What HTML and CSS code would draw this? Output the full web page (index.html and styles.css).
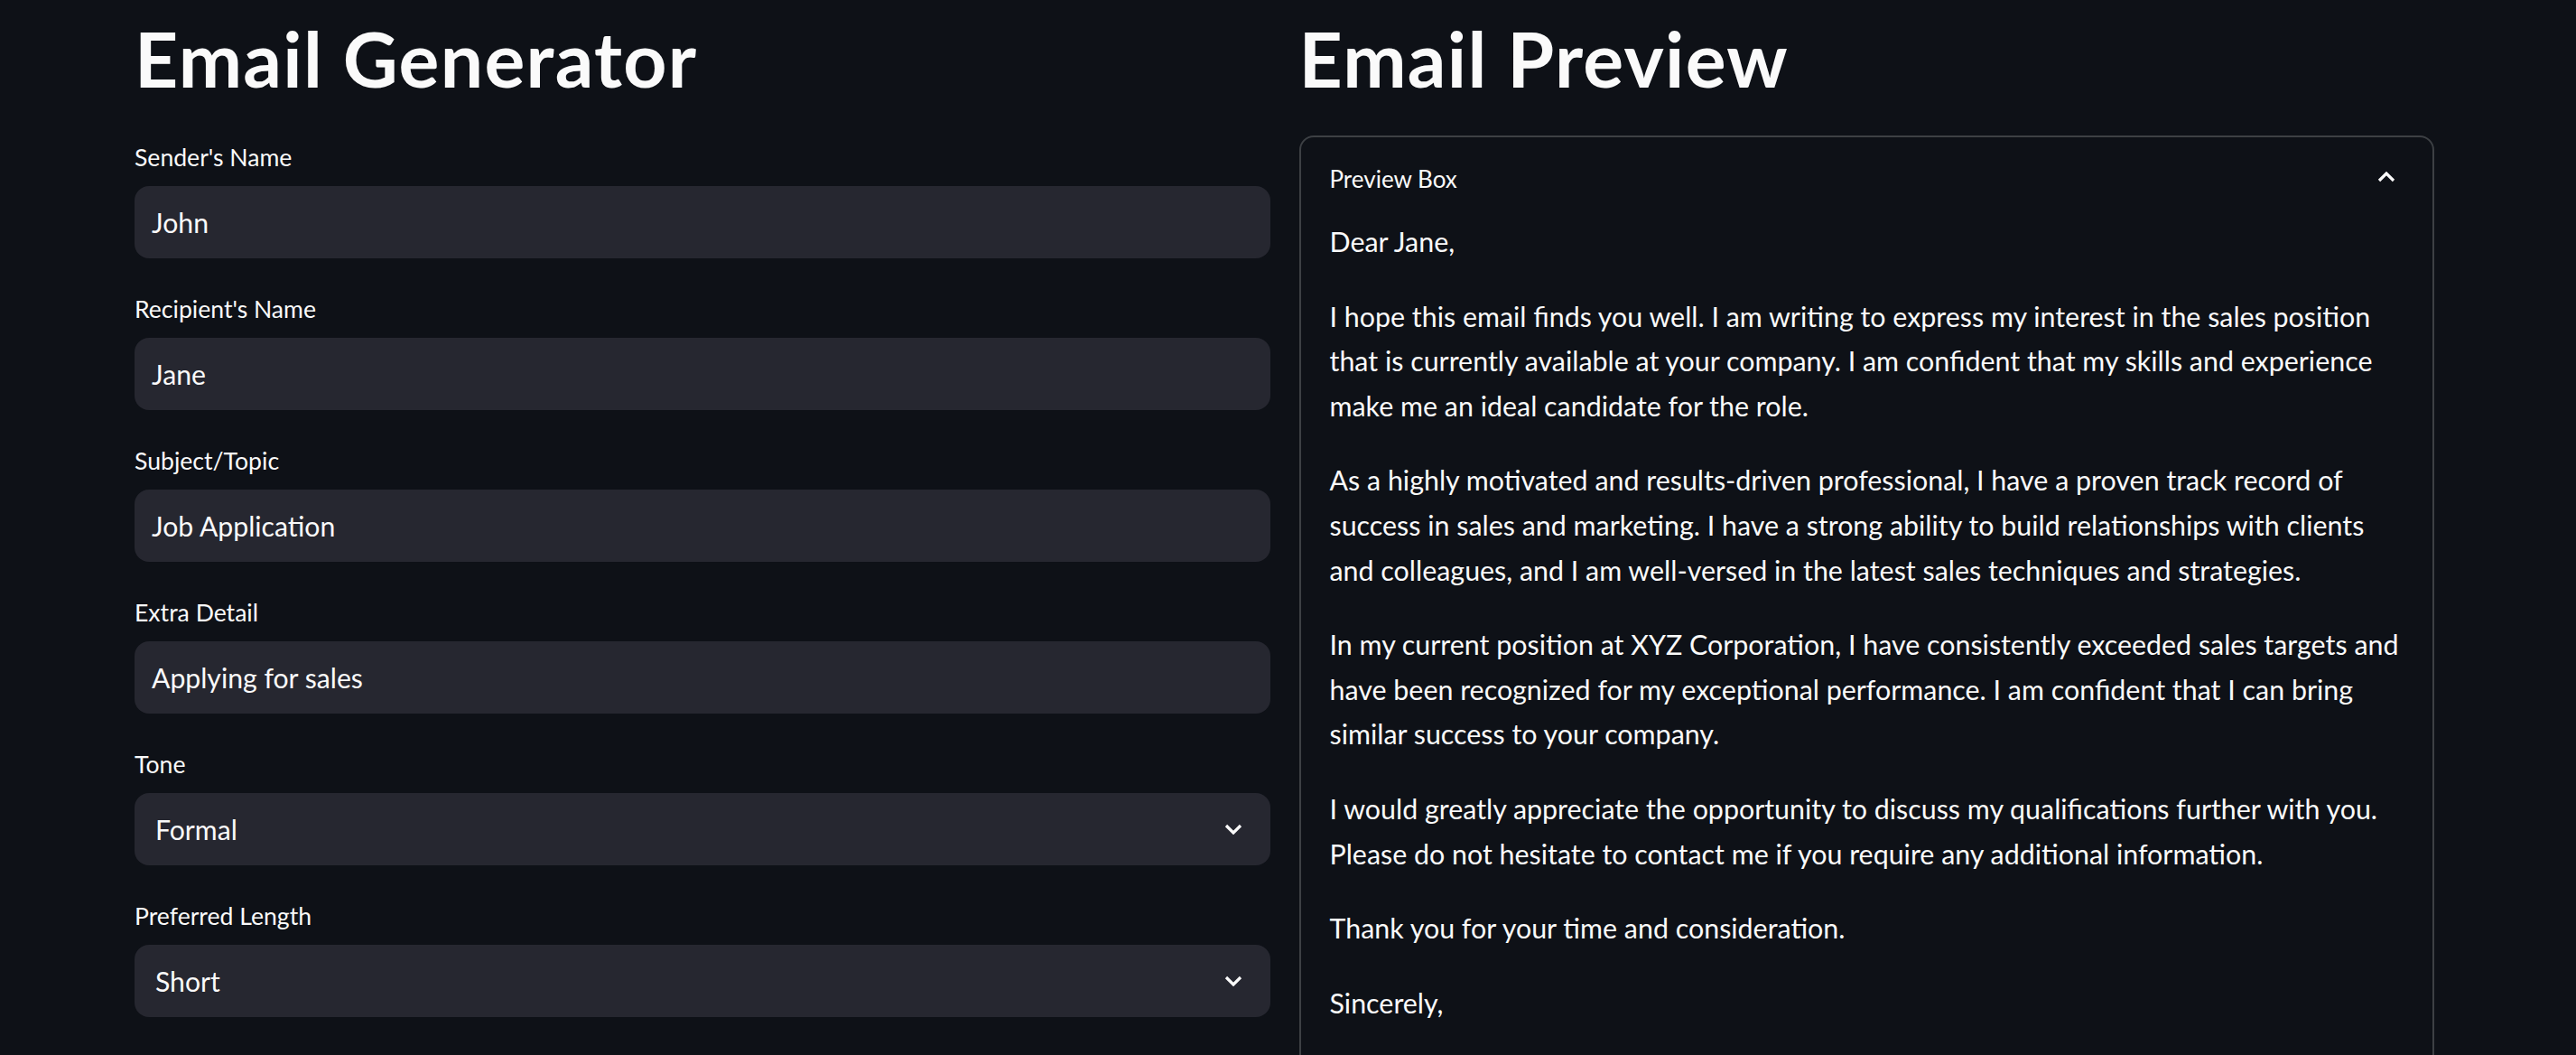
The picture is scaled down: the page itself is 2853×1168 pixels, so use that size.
FILE: index.html
```html
<!DOCTYPE html>
<html lang="en">
<head>
<meta charset="utf-8">
<title>Email Generator</title>
<link rel="stylesheet" href="styles.css">
</head>
<body>
<main class="page">
  <section class="column">
    <h1 class="title">Email Generator</h1>
    <div class="field">
      <label class="field-label">Sender's Name</label>
      <div class="input">John</div>
    </div>
    <div class="field">
      <label class="field-label">Recipient's Name</label>
      <div class="input">Jane</div>
    </div>
    <div class="field">
      <label class="field-label">Subject/Topic</label>
      <div class="input">Job Application</div>
    </div>
    <div class="field">
      <label class="field-label">Extra Detail</label>
      <div class="input">Applying for sales</div>
    </div>
    <div class="field">
      <label class="field-label">Tone</label>
      <div class="input select"><span>Formal</span>
        <svg class="chev" viewBox="0 0 20 12" width="20" height="12"><path d="M2 2 L10 10 L18 2" /></svg>
      </div>
    </div>
    <div class="field">
      <label class="field-label">Preferred Length</label>
      <div class="input select"><span>Short</span>
        <svg class="chev" viewBox="0 0 20 12" width="20" height="12"><path d="M2 2 L10 10 L18 2" /></svg>
      </div>
    </div>
  </section>
  <section class="column">
    <h1 class="title">Email Preview</h1>
    <div class="expander">
      <div class="summary">
        <span>Preview Box</span>
        <svg class="chev-up" viewBox="0 0 20 12" width="20" height="12"><path d="M2 10 L10 2 L18 10" /></svg>
      </div>
      <div class="body">
        <p>Dear Jane,</p>
        <p>I hope this email finds you well. I am writing to express my interest in the sales position<br>that is currently available at your company. I am confident that my skills and experience<br>make me an ideal candidate for the role.</p>
        <p>As a highly motivated and results-driven professional, I have a proven track record of<br>success in sales and marketing. I have a strong ability to build relationships with clients<br>and colleagues, and I am well-versed in the latest sales techniques and strategies.</p>
        <p>In my current position at XYZ Corporation, I have consistently exceeded sales targets and<br>have been recognized for my exceptional performance. I am confident that I can bring<br>similar success to your company.</p>
        <p>I would greatly appreciate the opportunity to discuss my qualifications further with you.<br>Please do not hesitate to contact me if you require any additional information.</p>
        <p>Thank you for your time and consideration.</p>
        <p>Sincerely,</p>
      </div>
    </div>
  </section>
</main>
</body>
</html>
```

FILE: styles.css
```css
html, body {
  margin: 0;
  padding: 0;
  background: #0e1117;
  color: #fafafa;
  font-family: Lato, "Open Sans", "Noto Sans", sans-serif;
  overflow: hidden;
}

.page {
  display: grid;
  grid-template-columns: 1fr 1fr;
  column-gap: 32px;
  width: 2547px;
  margin-left: 149px;
}

.column {
  display: flex;
  flex-direction: column;
  gap: 32px;
  min-width: 0;
}

.title {
  margin: 0;
  padding: 16px 0 5px 0;
  font-size: 84px;
  line-height: 97px;
  font-weight: 700;
  letter-spacing: 1.3px;
  color: #fafafa;
  white-space: nowrap;
}

.field {
  display: flex;
  flex-direction: column;
}

.field-label {
  height: 48px;
  line-height: 48px;
  font-size: 26.6px;
  margin-bottom: 8px;
  color: #fafafa;
}

.input {
  height: 80px;
  box-sizing: border-box;
  background: #262730;
  border-radius: 16px;
  display: flex;
  align-items: center;
  padding: 0 19px;
  font-size: 30.2px;
  color: #fafafa;
}

.select {
  padding-left: 23px;
  justify-content: space-between;
}

.chev, .chev-up {
  fill: none;
  stroke: #fafafa;
  stroke-width: 3.2;
  stroke-linecap: butt;
  stroke-linejoin: miter;
}

.chev {
  margin-right: 12px;
}

.expander {
  border: 2px solid #3d4044;
  border-radius: 16px;
  height: 1200px;
  box-sizing: border-box;
}

.summary {
  height: 91px;
  display: flex;
  align-items: center;
  justify-content: space-between;
  padding: 0 41px 0 32px;
  font-size: 26px;
}

.chev-up {
  margin-top: -3px;
}

.body {
  padding: 0 32px;
}

.body p {
  margin: 0 0 33px;
  font-size: 30.4px;
  line-height: 49.6px;
  white-space: nowrap;
}
```
